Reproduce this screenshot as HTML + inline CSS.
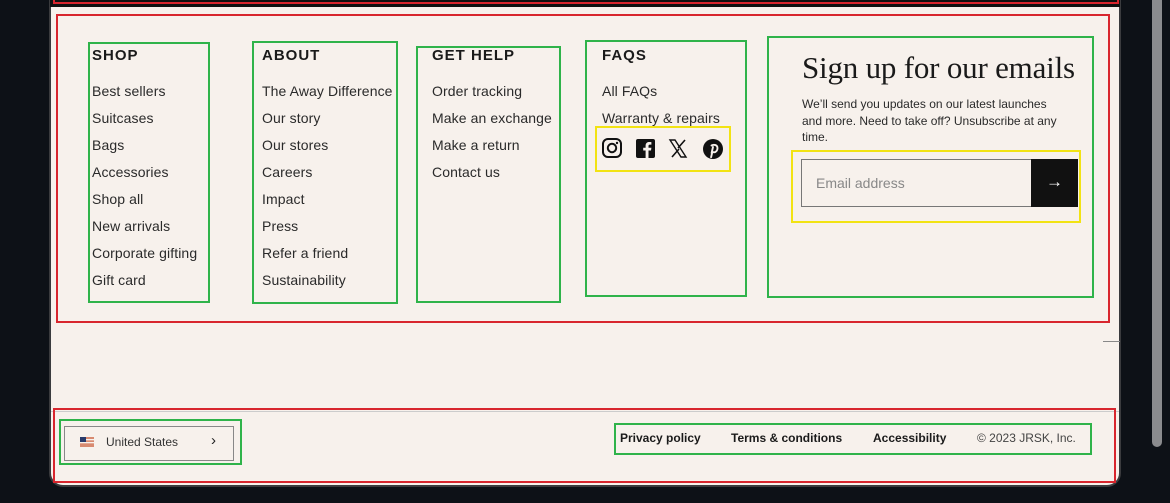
<!DOCTYPE html>
<html><head><meta charset="utf-8"><style>
*{margin:0;padding:0;box-sizing:border-box}
body{width:1170px;height:503px;background:#0d1117;position:relative;overflow:hidden;font-family:"Liberation Sans",sans-serif;color:#1a1a1a}
.panel{position:absolute;left:49px;top:-10px;width:1072px;height:497px;background:#f7f1ec;border:2px solid #3a3b3e;border-radius:0 0 14px 14px}
.topbar{position:absolute;left:50px;top:0;width:1070px;height:7px;background:#111}
.topred{position:absolute;left:53px;top:-3px;width:1066px;height:7px;border:2px solid #d8262e}
.box{position:absolute;border:2px solid #d8262e}
.g{position:absolute;border:2px solid #2fb34a}
.y{position:absolute;border:2px solid #f2e313}
.t{position:absolute;font-size:14px;color:#2a2a2a;white-space:nowrap;letter-spacing:.1px}
.h{position:absolute;font-size:15px;font-weight:bold;letter-spacing:1px;color:#1a1a1a}
.sb{position:absolute;left:1152px;top:0;width:10px;height:447px;background:#8a8b8e;border-radius:0 0 5px 5px}
</style></head><body>
<div class="panel"></div>
<div class="topbar"></div>
<div class="topred"></div>
<div class="sb"></div>

<div class="box" style="left:56px;top:14px;width:1054px;height:309px"></div>
<div class="g" style="left:88px;top:42px;width:122px;height:261px"></div>
<div class="g" style="left:252px;top:41px;width:146px;height:263px"></div>
<div class="g" style="left:416px;top:46px;width:145px;height:257px"></div>
<div class="g" style="left:585px;top:40px;width:162px;height:257px"></div>
<div class="g" style="left:767px;top:36px;width:327px;height:262px"></div>
<div class="y" style="left:595px;top:126px;width:136px;height:46px"></div>
<div class="y" style="left:791px;top:150px;width:290px;height:73px"></div>

<div class="h" style="left:92px;top:47px">SHOP</div>
<div class="h" style="left:262px;top:47px">ABOUT</div>
<div class="h" style="left:432px;top:47px">GET HELP</div>
<div class="h" style="left:602px;top:47px">FAQS</div>

<div class="t" style="left:92px;top:83px">Best sellers</div>
<div class="t" style="left:92px;top:110px">Suitcases</div>
<div class="t" style="left:92px;top:137px">Bags</div>
<div class="t" style="left:92px;top:164px">Accessories</div>
<div class="t" style="left:92px;top:191px">Shop all</div>
<div class="t" style="left:92px;top:218px">New arrivals</div>
<div class="t" style="left:92px;top:245px">Corporate gifting</div>
<div class="t" style="left:92px;top:272px">Gift card</div>

<div class="t" style="left:262px;top:83px">The Away Difference</div>
<div class="t" style="left:262px;top:110px">Our story</div>
<div class="t" style="left:262px;top:137px">Our stores</div>
<div class="t" style="left:262px;top:164px">Careers</div>
<div class="t" style="left:262px;top:191px">Impact</div>
<div class="t" style="left:262px;top:218px">Press</div>
<div class="t" style="left:262px;top:245px">Refer a friend</div>
<div class="t" style="left:262px;top:272px">Sustainability</div>

<div class="t" style="left:432px;top:83px">Order tracking</div>
<div class="t" style="left:432px;top:110px">Make an exchange</div>
<div class="t" style="left:432px;top:137px">Make a return</div>
<div class="t" style="left:432px;top:164px">Contact us</div>

<div class="t" style="left:602px;top:83px">All FAQs</div>
<div class="t" style="left:602px;top:110px">Warranty &amp; repairs</div>

<svg style="position:absolute;left:601px;top:137px" width="125" height="24" viewBox="0 0 125 24">
<rect x="2" y="2" width="18" height="18" rx="5" fill="none" stroke="#111" stroke-width="2"/>
<circle cx="11" cy="11" r="4.2" fill="none" stroke="#111" stroke-width="2"/>
<circle cx="16" cy="6" r="1.2" fill="#111"/>
<rect x="35" y="2" width="19" height="19" rx="2" fill="#111"/>
<path d="M47.5 21V13.5h2.5l.4-2.8h-2.9V9c0-.8.3-1.4 1.4-1.4h1.5V5.1c-.3 0-1.2-.1-2.2-.1-2.2 0-3.6 1.3-3.6 3.7v2h-2.4v2.8h2.4V21z" fill="#f7f1ec"/>
<path d="M69 3h5l11 17h-5z" fill="none" stroke="#111" stroke-width="1.4"/>
<path d="M84 3l-7 8M71 20l7-8" stroke="#111" stroke-width="1.6"/>
<circle cx="112" cy="12" r="10" fill="#111"/>
<path d="M110.5 8.5c2.5-1.5 6-.5 6 2.6 0 2.6-1.7 4.2-3.4 4.2-1 0-1.7-.6-1.7-.6l-1.3 5.5M112 10l-1.4 6" fill="none" stroke="#f7f1ec" stroke-width="1.9" stroke-linecap="round"/>
</svg>

<div style="position:absolute;left:802px;top:50px;font-family:'Liberation Serif',serif;font-size:31px;color:#1a1a1a;letter-spacing:-.2px;white-space:nowrap">Sign up for our emails</div>
<div style="position:absolute;left:802px;top:96px;width:259px;font-size:12px;line-height:16.5px;color:#2a2a2a">We’ll send you updates on our latest launches and more. Need to take off? Unsubscribe at any time.</div>
<div style="position:absolute;left:801px;top:159px;width:276px;height:48px;border:1px solid #777;background:#f7f1ec"></div>
<div style="position:absolute;left:816px;top:175px;font-size:14px;color:#888">Email address</div>
<div style="position:absolute;left:1031px;top:159px;width:47px;height:48px;background:#111;color:#fff;font-size:17px;text-align:center;line-height:46px">→</div>

<div style="position:absolute;left:1103px;top:341px;width:17px;height:1px;background:#888"></div>
<div style="position:absolute;left:51px;top:411px;width:1068px;height:1px;background:#ccc"></div>

<div class="box" style="left:53px;top:408px;width:1063px;height:75px"></div>
<div class="g" style="left:59px;top:419px;width:183px;height:46px"></div>
<div style="position:absolute;left:64px;top:426px;width:170px;height:35px;border:1px solid #888"></div>
<svg style="position:absolute;left:80px;top:437px" width="14" height="10"><rect width="14" height="10" fill="#d88a70"/><rect y="2" width="14" height="1.3" fill="#f7f1ec"/><rect y="5" width="14" height="1.3" fill="#f7f1ec"/><rect width="6" height="5" fill="#283a6a"/></svg>
<div style="position:absolute;left:106px;top:435px;font-size:12px;color:#333">United States</div>
<div style="position:absolute;left:211px;top:432px;font-size:15px;color:#222">&#8250;</div>

<div class="g" style="left:614px;top:423px;height:32px;width:478px"></div>
<div style="position:absolute;left:620px;top:431px;font-size:12px;font-weight:bold;color:#1a1a1a">Privacy policy</div>
<div style="position:absolute;left:731px;top:431px;font-size:12px;font-weight:bold;color:#1a1a1a">Terms &amp; conditions</div>
<div style="position:absolute;left:873px;top:431px;font-size:12px;font-weight:bold;color:#1a1a1a">Accessibility</div>
<div style="position:absolute;left:977px;top:431px;font-size:12px;color:#444">© 2023 JRSK, Inc.</div>
</body></html>
